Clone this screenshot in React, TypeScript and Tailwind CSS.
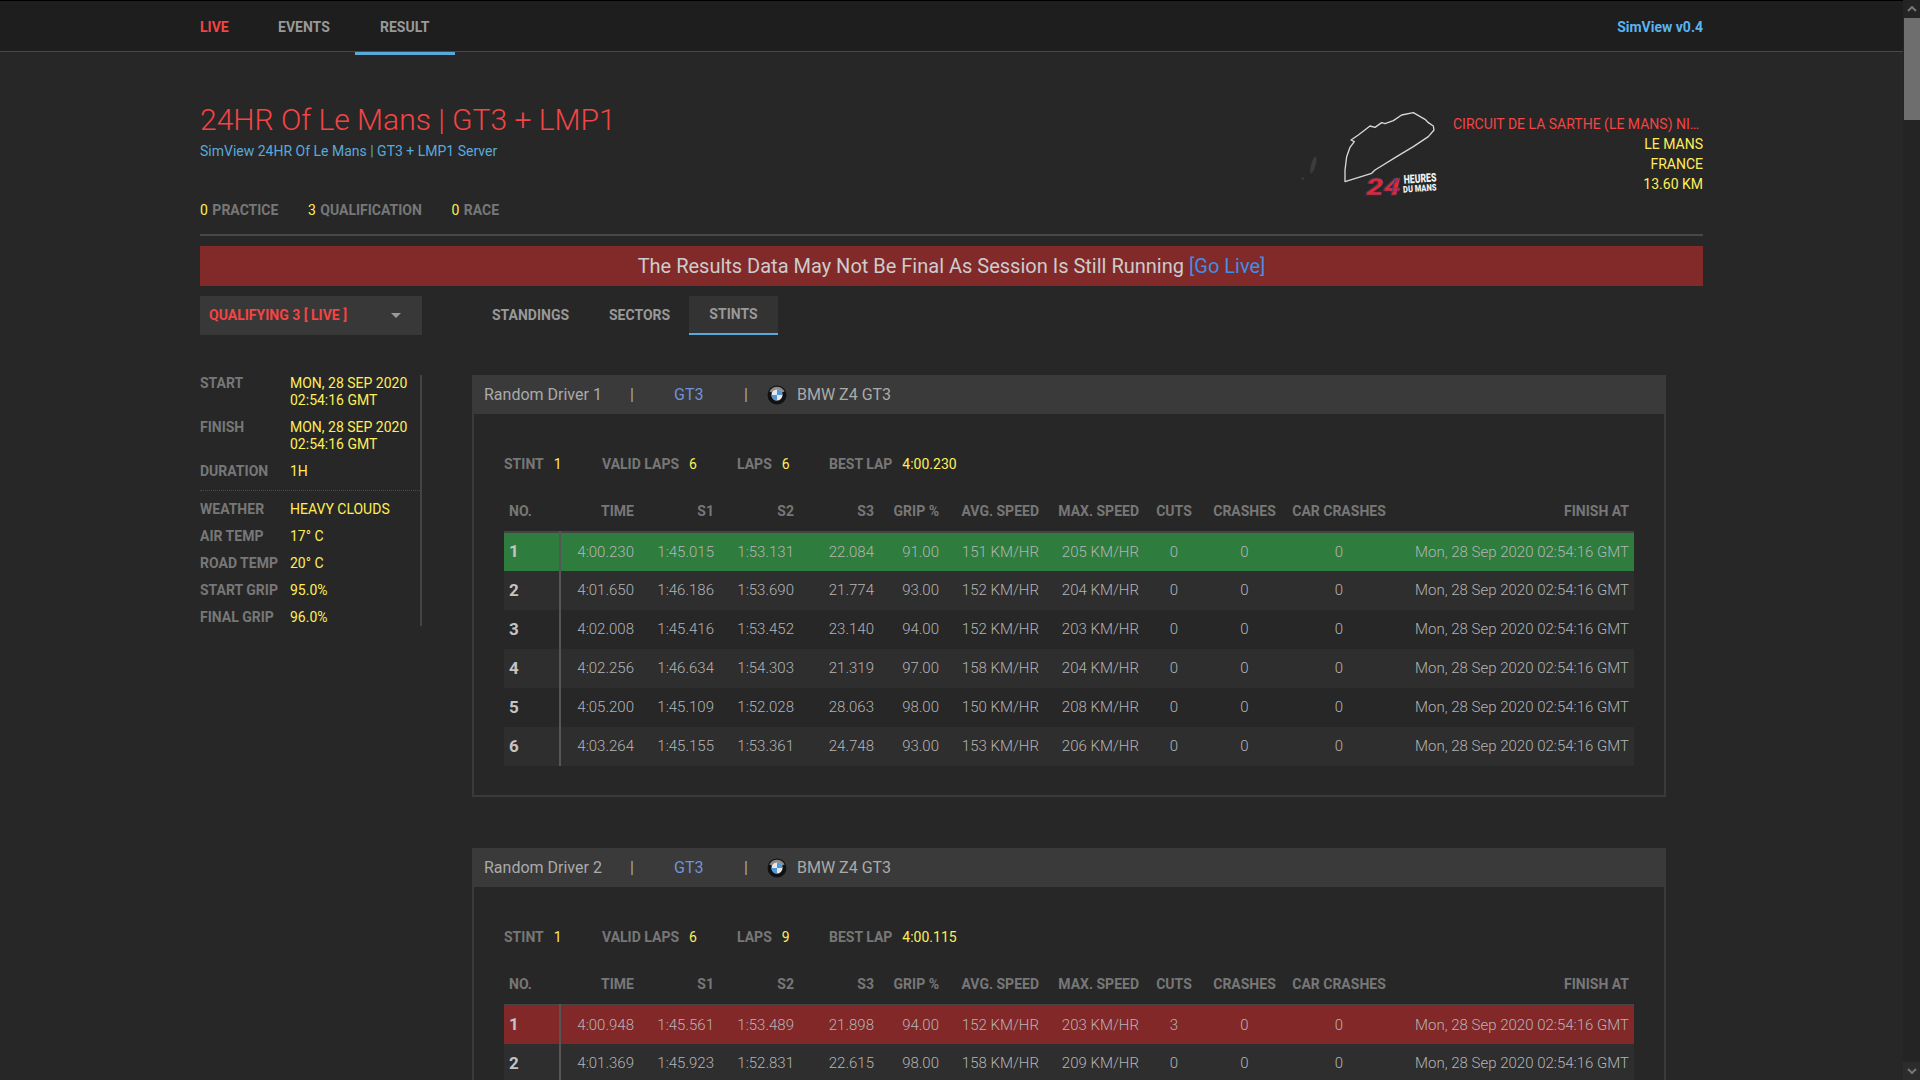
import React from "react";

type Lap = {
  no: number;
  time: string;
  s1: string;
  s2: string;
  s3: string;
  grip: string;
  avg: string;
  max: string;
  cuts: number;
  tone?: "green" | "red";
};

const firstLaps: Lap[] = [
  { no: 1, time: "4:00.230", s1: "1:45.015", s2: "1:53.131", s3: "22.084", grip: "91.00", avg: "151 KM/HR", max: "205 KM/HR", cuts: 0, tone: "green" },
  { no: 2, time: "4:01.650", s1: "1:46.186", s2: "1:53.690", s3: "21.774", grip: "93.00", avg: "152 KM/HR", max: "204 KM/HR", cuts: 0 },
  { no: 3, time: "4:02.008", s1: "1:45.416", s2: "1:53.452", s3: "23.140", grip: "94.00", avg: "152 KM/HR", max: "203 KM/HR", cuts: 0 },
  { no: 4, time: "4:02.256", s1: "1:46.634", s2: "1:54.303", s3: "21.319", grip: "97.00", avg: "158 KM/HR", max: "204 KM/HR", cuts: 0 },
  { no: 5, time: "4:05.200", s1: "1:45.109", s2: "1:52.028", s3: "28.063", grip: "98.00", avg: "150 KM/HR", max: "208 KM/HR", cuts: 0 },
  { no: 6, time: "4:03.264", s1: "1:45.155", s2: "1:53.361", s3: "24.748", grip: "93.00", avg: "153 KM/HR", max: "206 KM/HR", cuts: 0 },
];

const secondLaps: Lap[] = [
  { no: 1, time: "4:00.948", s1: "1:45.561", s2: "1:53.489", s3: "21.898", grip: "94.00", avg: "152 KM/HR", max: "203 KM/HR", cuts: 3, tone: "red" },
  { no: 2, time: "4:01.369", s1: "1:45.923", s2: "1:52.831", s3: "22.615", grip: "98.00", avg: "158 KM/HR", max: "209 KM/HR", cuts: 0 },
];

const FINISH_AT = "Mon, 28 Sep 2020 02:54:16 GMT";

const TrackLogo = () => (
  <svg width="150" height="110" viewBox="0 0 450 330" className="mr-[3px] shrink-0">
    <ellipse cx="40" cy="225" rx="7" ry="26" fill="#3c3c3c" transform="rotate(15 40 225)" />
    <circle cx="8" cy="266" r="4" fill="#3a3a3a" />
    <path
      d="M135 275 L135 240 L140 200 L150 172 L163 155 L153 150 L175 135 L210 108 L225 112 L245 98 L255 101 L280 92 L305 75 L340 68 L375 88 L385 98 L400 108 L402 120 L385 140 L340 170 L290 200 L225 240 L215 250 Z"
      fill="none"
      stroke="#d8d8d8"
      strokeWidth="4"
      strokeLinejoin="round"
    />
    <text x="198" y="314" fontSize="74" fontWeight="900" fontStyle="italic" fill="#e0282e" stroke="#2c3f80" strokeWidth="1.5" textLength="104" lengthAdjust="spacingAndGlyphs" fontFamily="Roboto, sans-serif">
      24
    </text>
    <text x="312" y="281" fontSize="36" fontWeight="900" fill="#f2f2f2" textLength="98" lengthAdjust="spacingAndGlyphs" fontFamily="Roboto, sans-serif" transform="rotate(-4 312 281)">
      HEURES
    </text>
    <text x="310" y="308" fontSize="28" fontWeight="900" fill="#f2f2f2" textLength="100" lengthAdjust="spacingAndGlyphs" fontFamily="Roboto, sans-serif" transform="rotate(-4 310 308)">
      DU MANS
    </text>
  </svg>
);

const BmwLogo = () => (
  <svg width="20" height="20" viewBox="0 0 20 20" className="shrink-0">
    <circle cx="10" cy="10" r="9.5" fill="#111" />
    <path d="M2.4 6.5 A8.5 8.5 0 0 1 17.6 6.5 L14 8 A4.5 4.5 0 0 0 6 8 Z" fill="#8c8c8c" />
    <circle cx="10" cy="10" r="5.5" fill="#e8e8e8" />
    <path d="M10 10 L10 4.5 A5.5 5.5 0 0 1 15.5 10 Z" fill="#4f97d8" />
    <path d="M10 10 L10 15.5 A5.5 5.5 0 0 1 4.5 10 Z" fill="#4f97d8" />
  </svg>
);

const SideRow = ({ label, value }: { label: string; value: React.ReactNode }) => (
  <div className="flex text-[14px] leading-[17px]">
    <div className="w-[90px] shrink-0 font-bold text-[#777777]">{label}</div>
    <div className="text-[#ffee58]">{value}</div>
  </div>
);

const StintStat = ({ label, value, className }: { label: string; value: string; className: string }) => (
  <div className={className}>
    <span className="font-bold text-[#777777]">{label}</span>
    <span className="text-[#ffee58]">{value}</span>
  </div>
);

const th = "pb-[11px] align-bottom text-[14px] leading-[17px] font-bold text-[#777777]";
const td = "font-light whitespace-nowrap";

const LapTable = ({ laps }: { laps: Lap[] }) => (
  <table className="w-[1130px] table-fixed border-collapse">
    <colgroup>
      <col className="w-[56px]" />
      <col className="w-[79px]" />
      <col className="w-[80px]" />
      <col className="w-[80px]" />
      <col className="w-[80px]" />
      <col className="w-[65px]" />
      <col className="w-[100px]" />
      <col className="w-[100px]" />
      <col className="w-[58px]" />
      <col className="w-[83px]" />
      <col className="w-[106px]" />
      <col className="w-[243px]" />
    </colgroup>
    <thead>
      <tr className="h-[58px] border-b-2 border-[#444444]">
        <th className={`${th} pl-[5px] text-left`}>NO.</th>
        <th className={`${th} pr-[5px] text-right`}>TIME</th>
        <th className={`${th} pr-[5px] text-right`}>S1</th>
        <th className={`${th} pr-[5px] text-right`}>S2</th>
        <th className={`${th} pr-[5px] text-right`}>S3</th>
        <th className={`${th} pr-[5px] text-right`}>GRIP %</th>
        <th className={`${th} pr-[5px] text-right`}>AVG. SPEED</th>
        <th className={`${th} pr-[5px] text-right`}>MAX. SPEED</th>
        <th className={`${th} pl-[2px] text-center`}>CUTS</th>
        <th className={`${th} pl-[2px] text-center`}>CRASHES</th>
        <th className={`${th} pl-[2px] text-center`}>CAR CRASHES</th>
        <th className={`${th} pr-[5px] text-right`}>FINISH AT</th>
      </tr>
    </thead>
    <tbody>
      {laps.map((lap) => {
        let bg = lap.no % 2 === 0 ? "bg-[#2e2e2e]" : "bg-transparent";
        if (lap.tone === "green") bg = "bg-[#2e7d3e]";
        if (lap.tone === "red") bg = "bg-[#822828]";
        return (
          <tr key={lap.no} className={`h-[39px] text-[15px] text-[#b4b4b4] ${bg}`}>
            <td className="border-r-2 border-[#555555] pl-[5px] text-[17px] font-bold text-[#c4c4c4]">{lap.no}</td>
            <td className={`${td} pr-[5px] text-right`}>{lap.time}</td>
            <td className={`${td} pr-[5px] text-right`}>{lap.s1}</td>
            <td className={`${td} pr-[5px] text-right`}>{lap.s2}</td>
            <td className={`${td} pr-[5px] text-right`}>{lap.s3}</td>
            <td className={`${td} pr-[5px] text-right`}>{lap.grip}</td>
            <td className={`${td} pr-[5px] text-right`}>{lap.avg}</td>
            <td className={`${td} pr-[5px] text-right`}>{lap.max}</td>
            <td className={`${td} pl-[2px] text-center`}>{lap.cuts}</td>
            <td className={`${td} pl-[2px] text-center`}>0</td>
            <td className={`${td} pl-[2px] text-center`}>0</td>
            <td className={`${td} pr-[5px] text-right`}>{FINISH_AT}</td>
          </tr>
        );
      })}
    </tbody>
  </table>
);

const DriverCard = ({
  driver,
  validLaps,
  laps,
  bestLap,
  rows,
}: {
  driver: string;
  validLaps: string;
  laps: string;
  bestLap: string;
  rows: Lap[];
}) => (
  <section className="w-[1194px] border-2 border-t-0 border-[#3a3a3a]">
    <div className="-mx-[2px] flex h-[39px] items-center bg-[#3a3a3a] text-[16px] text-[#aaaaaa]">
      <div className="w-[158px] pl-[12px]">{driver}</div>
      <div className="w-[44px]">|</div>
      <div className="w-[70px] text-[#6f93dc]">GT3</div>
      <div className="w-[23px]">|</div>
      <BmwLogo />
      <div className="ml-[10px]">BMW Z4 GT3</div>
    </div>
    <div className="px-[30px] pb-[29px] pt-[40px]">
      <div className="flex h-[20px] items-center text-[14px]">
        <StintStat label="STINT" value="1" className="flex w-[98px] gap-[10px]" />
        <StintStat label="VALID LAPS" value={validLaps} className="flex w-[135px] gap-[10px]" />
        <StintStat label="LAPS" value={laps} className="flex w-[92px] gap-[10px]" />
        <StintStat label="BEST LAP" value={bestLap} className="flex gap-[10px]" />
      </div>
      <LapTable laps={rows} />
    </div>
  </section>
);

export default function App() {
  return (
    <div className="flex h-screen overflow-hidden bg-[#272727] font-['Roboto',sans-serif]">
      <div className="min-w-0 flex-1 overflow-hidden">
        <header className="h-[52px] border-b border-t border-b-[#484848] border-t-black bg-[#1e1e1e]">
          <nav className="relative ml-[200px] flex h-[50px] w-[1503px] items-center pt-[2px] text-[14px] font-bold">
            <span className="w-[78px] text-[#f44444]">LIVE</span>
            <span className="w-[102px] text-[#999999]">EVENTS</span>
            <span className="text-[#999999]">RESULT</span>
            <span className="absolute bottom-[-4px] left-[155px] h-[3px] w-[100px] bg-[#5aa9dc]" />
            <span className="ml-auto text-[#5ab4f0]">SimView v0.4</span>
          </nav>
        </header>

        <main className="ml-[200px] w-[1503px]">
          <div className="flex h-[148px] justify-between">
            <div className="pt-[50px]">
              <h1 className="text-[30px] leading-[36px] font-light text-[#f44444]">24HR Of Le Mans | GT3 + LMP1</h1>
              <div className="mt-[3px] text-[14px] leading-[20px] text-[#5aa9dc]">SimView 24HR Of Le Mans | GT3 + LMP1 Server</div>
            </div>
            <div className="flex pt-[38px]">
              <TrackLogo />
              <div className="w-[250px] pt-[24px] text-right text-[14px] leading-[20px] text-[#ffee58]">
                <div className="truncate text-left text-[#f44444]">CIRCUIT DE LA SARTHE (LE MANS) NIGHT</div>
                <div>LE MANS</div>
                <div>FRANCE</div>
                <div>13.60 KM</div>
              </div>
            </div>
          </div>

          <div className="flex h-[20px] items-center gap-[29.5px] text-[14px] font-bold text-[#777777]">
            <div><span className="mr-px font-normal text-[#ffee58]">0</span> PRACTICE</div>
            <div><span className="mr-px font-normal text-[#ffee58]">3</span> QUALIFICATION</div>
            <div><span className="mr-px font-normal text-[#ffee58]">0</span> RACE</div>
          </div>

          <div className="mt-[14px] h-[2px] bg-[#484848]" />

          <div className="mt-[10px] flex h-[40px] items-center justify-center bg-[#822a2a] text-[20px] text-[#cccccc]">
            The Results Data May Not Be Final As Session Is Still Running&nbsp;<span className="text-[#3d8ee8]">[Go Live]</span>
          </div>

          <div className="mt-[10px] flex h-[39px]">
            <div className="flex w-[222px] items-center bg-[#383838] pl-[9px] pr-[21px] text-[14px] font-bold text-[#f44444]">
              <span>QUALIFYING 3 [ LIVE ]</span>
              <span className="ml-auto h-0 w-0 border-x-[5px] border-t-[5px] border-x-transparent border-t-[#999999]" />
            </div>
            <div className="ml-[48px] flex text-[14px] font-bold text-[#999999]">
              <div className="flex w-[117px] items-center pl-[22px]">STANDINGS</div>
              <div className="flex w-[102px] items-center pl-[22px]">SECTORS</div>
              <div className="flex w-[89px] items-center justify-center border-b-2 border-[#5aa9dc] bg-[#333333]">STINTS</div>
            </div>
          </div>

          <div className="mt-[40px] flex items-start">
            <aside className="flex w-[222px] shrink-0 flex-col gap-[10px] border-r-2 border-[#444444]">
              <SideRow label="START" value={<>MON, 28 SEP 2020<br />02:54:16 GMT</>} />
              <SideRow label="FINISH" value={<>MON, 28 SEP 2020<br />02:54:16 GMT</>} />
              <SideRow label="DURATION" value="1H" />
              <div className="h-px border-b border-dotted border-[#4a4a4a]" />
              <SideRow label="WEATHER" value="HEAVY CLOUDS" />
              <SideRow label="AIR TEMP" value="17° C" />
              <SideRow label="ROAD TEMP" value="20° C" />
              <SideRow label="START GRIP" value="95.0%" />
              <SideRow label="FINAL GRIP" value="96.0%" />
            </aside>
            <div className="ml-[50px] flex flex-col gap-[51px]">
              <DriverCard driver="Random Driver 1" validLaps="6" laps="6" bestLap="4:00.230" rows={firstLaps} />
              <DriverCard driver="Random Driver 2" validLaps="6" laps="9" bestLap="4:00.115" rows={secondLaps} />
            </div>
          </div>
        </main>
      </div>

      <div className="flex h-screen w-[17px] shrink-0 flex-col bg-[#242424]">
        <div className="flex h-[18px] items-center justify-center text-[#777777]">
          <svg width="10" height="6" viewBox="0 0 10 6"><path d="M1 5 L5 1 L9 5" fill="none" stroke="currentColor" strokeWidth="2" /></svg>
        </div>
        <div className="ml-px h-[102px] bg-[#6e6e6e]" />
        <div className="mt-auto flex h-[18px] items-center justify-center bg-[#2c2c2c] text-[#777777]">
          <svg width="10" height="6" viewBox="0 0 10 6"><path d="M1 1 L5 5 L9 1" fill="none" stroke="currentColor" strokeWidth="2" /></svg>
        </div>
      </div>
    </div>
  );
}
